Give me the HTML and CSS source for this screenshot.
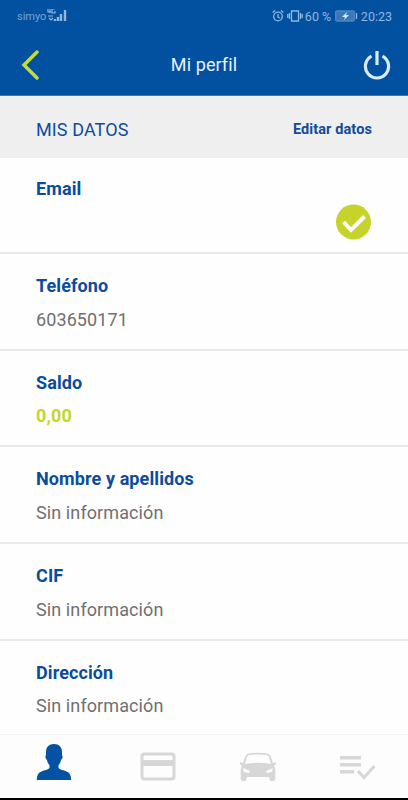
FILE: index.html
```
<!DOCTYPE html>
<html lang="es">
<head>
<meta charset="utf-8">
<meta name="viewport" content="width=device-width, initial-scale=1">
<title>Mi perfil</title>
<link rel="stylesheet" href="styles.css">
</head>
<body>
<header>
<div class="status">
<span class="carrier">simyo</span>
<svg class="signal" width="20" height="14" viewBox="0 0 20 14">
<path d="M1 0v3h3M3 0v4M8 0H5v4h3V2M1 7h5M2 9l2 2 2-2"/>
<path class="bars" d="M8 12v-2M11 12V8M14 12V5M18 12V1"/>
</svg>
<span class="grow"></span>
<svg class="alarm" width="12" height="14" viewBox="0 0 12 14">
<circle cx="6" cy="7.5" r="4.3"/><path d="M6 5v3l2 1M.6 3.6l2.5-2M11.400 3.600l-2.500-2"/>
</svg>
<svg class="vibrate" width="16" height="14" viewBox="0 0 16 14">
<path d="M4.500 2h7v10h-7zM2.500 4v6M.8 5v4M13.500 4v6M15.200 5v4"/>
</svg>
<span class="percent">60 %</span>
<svg class="battery" width="23" height="12" viewBox="0 0 23 12">
<rect x=".5" y="1" width="19" height="10" rx="1.500"/><path class="tip" d="M21.500 3v6"/><path class="bolt" d="M12 2L7 7h3l-1 3 5-5h-3z"/>
</svg>
<span class="clock">20:23</span>
</div>
<div class="bar">
<svg class="back" width="18" height="30" viewBox="0 0 18 30"><path d="M16 2L3 15l13 13"/></svg>
<h1>Mi perfil</h1>
<svg class="power" width="28" height="32" viewBox="0 0 28 32"><path d="M8.500 7.200a11.600 11.600 0 1 0 11 0M14 2v14"/></svg>
</div>
</header>

<div class="section">
<h2>MIS DATOS</h2>
<a class="edit">Editar datos</a>
</div>

<main>
<div class="row email">
<h3>Email</h3>
<svg class="ok" width="36" height="36" viewBox="0 0 36 36"><circle cx="17.500" cy="18" r="17.500"/><path d="M7.500 18l7.500 8L28.500 12.500"/></svg>
</div>
<div class="row">
<h3>Teléfono</h3>
<p>603650171</p>
</div>
<div class="row">
<h3>Saldo</h3>
<p class="saldo">0,00</p>
</div>
<div class="row">
<h3>Nombre y apellidos</h3>
<p>Sin información</p>
</div>
<div class="row">
<h3>CIF</h3>
<p>Sin información</p>
</div>
<div class="row">
<h3>Dirección</h3>
<p>Sin información</p>
</div>
</main>

<nav>
<svg class="active" width="36" height="38" viewBox="0 0 36 38">
<path d="M18 0c5 0 8 3 8 8v3c1 1 .7 4-1 5-.6 3-1.500 4-2.500 5v3c2 2 5 2 8 3.500 3 1.300 4.500 3 4.700 8.500H.8c.2-5.500 1.700-7.200 4.700-8.500 3-1.500 6-1.500 8-3.500v-3c-1-1-1.900-2-2.500-5-1.700-1-2-4-1-5V8c0-5 3-8 8-8z"/>
</svg>
<svg width="36" height="38" viewBox="0 0 36 38">
<rect class="line" x="2" y="10" width="32" height="25" rx="2.500"/><path d="M2 16h32v6H2z"/>
</svg>
<svg width="36" height="38" viewBox="0 0 36 38">
<path fill-rule="evenodd" d="M5 13c1-2.500 2-3 4-3.500q9-1.500 18 0c2 .5 3 1 4 3.500l2 6 3-1v2l-2 2c1 1 1.300 3 1.300 5V35q0 2-2 2h-2q-2 0-2-2v-2H6.700v2q0 2-2 2h-2q-2 0-2-2v-8c0-2 .3-4 1.300-5l-2-2v-2l3 1zM7 13l-2 7q13-2.500 26 0l-2-7c-.5-1.500-1-1.800-3-2.100q-8-1-16 0c-2 .3-2.500.6-3 2.100z"/>
<path class="lamp" d="M3 24l7 3-1 2-5-1zM33 24l-7 3 1 2 5-1z"/>
</svg>
<svg width="36" height="38" viewBox="0 0 36 38">
<path d="M0 12h21v3.500H0zM0 19h21v3.500H0zM0 26h14v3.500H0z"/><path class="tick" d="M18 27l6 6.500L34.500 22"/>
</svg>
</nav>
</body>
</html>
```
FILE: styles.css
```
* {
  box-sizing: border-box;
}
body {
  margin: 0;
  height: 800px;
  overflow: hidden;
  display: flex;
  flex-direction: column;
  background: #fefefe;
  font-family: Roboto, sans-serif;
  color: #707070;
}
h1, h2, h3, p {
  margin: 0;
}
svg {
  display: block;
  flex: none;
}
header {
  height: 96px;
  background: #0251a1;
  border-bottom: 1px solid #4773ae;
}
.status {
  display: flex;
  align-items: center;
  height: 32px;
  padding: 0 16px 0 17px;
  color: #91b6df;
  font-size: 12.500px;
}
.carrier {
  width: 30px;
  font-size: 11px;
  color: #78a4d5;
}
.grow {
  flex: 1;
}
.status svg {
  fill: none;
  stroke: #91b6df;
  stroke-width: 1.300;
}
.status .signal {
  stroke-width: 1.200;
}
.signal .bars {
  stroke-width: 2.400;
}
.vibrate {
  margin-left: 3px;
}
.percent {
  width: 27px;
  margin-left: 2px;
  white-space: nowrap;
}
.battery {
  margin: 0 3px 0 3px;
}
.battery rect {
  fill: #3c78b9;
  stroke: #4d85c1;
}
.battery .bolt {
  fill: #d9ebff;
  stroke: none;
}
.bar {
  display: flex;
  align-items: center;
  justify-content: space-between;
  height: 66px;
  padding: 0 17px 0 21px;
}
.bar svg {
  fill: none;
  stroke: #dceaff;
  stroke-width: 3;
}
.bar .back {
  stroke: #c3dc3c;
  stroke-width: 3.500;
  stroke-linecap: round;
}
.bar .power {
  stroke-width: 3.200;
}
h1 {
  padding: 0 0 2px 6px;
  font-size: 18px;
  font-weight: 400;
  letter-spacing: .1px;
  color: #e8f1ff;
}
.section {
  display: flex;
  align-items: center;
  justify-content: space-between;
  height: 62px;
  padding: 4px 36px 0;
  background: #efefef;
  color: #0f4c9b;
}
h2 {
  font-size: 18px;
  font-weight: 400;
  letter-spacing: .1px;
}
.edit {
  font-size: 14.500px;
  font-weight: 700;
  letter-spacing: .1px;
}
main {
  flex: 1;
  min-height: 0;
  overflow: hidden;
}
.row {
  height: 96.700px;
  padding: 21px 36px 0;
  border-bottom: 2px solid #e8e8e8;
}
.row:last-child {
  border-bottom: 0;
}
h3 {
  line-height: 22px;
  font-size: 18px;
  font-weight: 700;
  letter-spacing: .1px;
  color: #0b4c9c;
}
.row p {
  margin-top: 11.500px;
  line-height: 22px;
  font-size: 18px;
  letter-spacing: .1px;
}
.row .saldo {
  font-weight: 700;
  color: #c3d62d;
}
.email {
  height: 96px;
  padding-top: 20px;
}
.ok {
  margin: 4px 0 0 auto;
  fill: #c5d32a;
}
.ok path {
  fill: none;
  stroke: #fff;
  stroke-width: 4;
}
nav {
  display: flex;
  justify-content: space-between;
  height: 66px;
  padding: 9px 32px 0 36px;
  background: #fdfdfd;
  border-top: 1px solid #f2f2f2;
  border-bottom: 2px solid #000;
  fill: #d7d7d7;
}
nav svg:nth-child(2) {
  margin-left: 4px;
}
nav .active {
  fill: #0551a3;
}
nav .line, nav .tick {
  fill: none;
  stroke: #d7d7d7;
  stroke-width: 3;
}
nav .lamp {
  fill: #fdfdfd;
}
```
